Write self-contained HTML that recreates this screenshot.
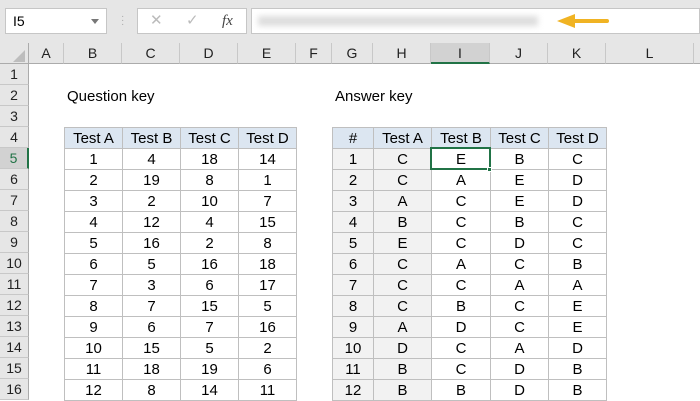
<!DOCTYPE html><html><head><style>
*{margin:0;padding:0;box-sizing:border-box}
body{width:700px;height:400px;overflow:hidden;background:#fff;font-family:"Liberation Sans",sans-serif;position:relative;color:#000}
.abs{position:absolute}
.ch{position:absolute;top:43px;height:21px;background:#e6e6e6;border-right:1px solid #c8c8c8;border-bottom:1px solid #ababab;font-size:14px;text-align:center;line-height:21px;color:#222}
.rh{position:absolute;left:0;width:29px;height:21px;background:#e6e6e6;border-bottom:1px solid #c8c8c8;border-right:1px solid #ababab;font-size:14px;text-align:center;line-height:21px;color:#222}
table{position:absolute;border-collapse:collapse;font-size:15px}
td{height:21px;border:1px solid #bfbfbf;text-align:center;padding:0;line-height:19px}
tr.h td{background:#dce6f1}
td.g{background:#f2f2f2}
</style></head><body>
<div class="abs" style="left:0;top:0;width:700px;height:43px;background:#e6e6e6"></div>
<div class="abs" style="left:5px;top:8px;width:102px;height:26px;background:#fff;border:1px solid #c6c6c6;font-size:14px;line-height:24px;padding-left:7px">I5<span style="position:absolute;right:7px;top:10px;border-left:4px solid transparent;border-right:4px solid transparent;border-top:5px solid #777"></span></div>
<div class="abs" style="left:121px;top:15px;color:#aaa;font-size:10px;line-height:4px">·<br>·<br>·</div>
<div class="abs" style="left:137px;top:8px;width:110px;height:26px;background:#fff;border:1px solid #c6c6c6;font-size:15px;line-height:24px;color:#bbb"><span style="position:absolute;left:12px">✕</span><span style="position:absolute;left:48px">✓</span><span style="position:absolute;left:84px;color:#444;font-family:'Liberation Serif';font-style:italic">fx</span></div>
<div class="abs" style="left:251px;top:8px;width:449px;height:26px;background:#fff;border:1px solid #c6c6c6"></div>
<div class="abs" style="left:258px;top:16px;width:280px;height:10px;background:#ddd;filter:blur(3px)"></div>
<svg class="abs" style="left:555px;top:12px" width="54" height="18"><path d="M18 9H52" stroke="#f0b323" stroke-width="4" stroke-linecap="round"/><path d="M2 9L20 2V16Z" fill="#f0b323"/></svg>
<div class="ch" style="left:0;width:29px;border-right:1px solid #ababab"><svg width="29" height="21" style="position:absolute;left:0;top:0"><path d="M25 7V19H13Z" fill="#bdbdbd"/></svg></div>
<div class="ch" style="left:29px;width:35px">A</div>
<div class="ch" style="left:64px;width:58px">B</div>
<div class="ch" style="left:122px;width:58px">C</div>
<div class="ch" style="left:180px;width:58px">D</div>
<div class="ch" style="left:238px;width:58px">E</div>
<div class="ch" style="left:296px;width:36px">F</div>
<div class="ch" style="left:332px;width:41px">G</div>
<div class="ch" style="left:373px;width:58px">H</div>
<div class="ch" style="left:431px;width:59px;background:#d2d2d2;border-bottom:2px solid #217346">I</div>
<div class="ch" style="left:490px;width:58px">J</div>
<div class="ch" style="left:548px;width:58px">K</div>
<div class="ch" style="left:606px;width:88px">L</div>
<div class="ch" style="left:694px;width:10px"></div>
<div class="rh" style="top:64px">1</div><div class="rh" style="top:85px">2</div><div class="rh" style="top:106px">3</div><div class="rh" style="top:127px">4</div>
<div class="rh" style="top:148px;background:#d2d2d2;border-right:2px solid #217346;color:#217346">5</div>
<div class="rh" style="top:169px">6</div><div class="rh" style="top:190px">7</div><div class="rh" style="top:211px">8</div><div class="rh" style="top:232px">9</div><div class="rh" style="top:253px">10</div><div class="rh" style="top:274px">11</div><div class="rh" style="top:295px">12</div><div class="rh" style="top:316px">13</div><div class="rh" style="top:337px">14</div><div class="rh" style="top:358px">15</div><div class="rh" style="top:379px">16</div>
<div class="abs" style="left:67px;top:88px;font-size:15px">Question key</div>
<div class="abs" style="left:335px;top:88px;font-size:15px">Answer key</div>
<table style="left:64px;top:127px"><colgroup><col style="width:58px"><col style="width:58px"><col style="width:58px"><col style="width:58px"></colgroup>
<tr class="h"><td>Test A</td><td>Test B</td><td>Test C</td><td>Test D</td></tr>
<tr><td>1</td><td>4</td><td>18</td><td>14</td></tr>
<tr><td>2</td><td>19</td><td>8</td><td>1</td></tr>
<tr><td>3</td><td>2</td><td>10</td><td>7</td></tr>
<tr><td>4</td><td>12</td><td>4</td><td>15</td></tr>
<tr><td>5</td><td>16</td><td>2</td><td>8</td></tr>
<tr><td>6</td><td>5</td><td>16</td><td>18</td></tr>
<tr><td>7</td><td>3</td><td>6</td><td>17</td></tr>
<tr><td>8</td><td>7</td><td>15</td><td>5</td></tr>
<tr><td>9</td><td>6</td><td>7</td><td>16</td></tr>
<tr><td>10</td><td>15</td><td>5</td><td>2</td></tr>
<tr><td>11</td><td>18</td><td>19</td><td>6</td></tr>
<tr><td>12</td><td>8</td><td>14</td><td>11</td></tr>
</table>
<table style="left:332px;top:127px"><colgroup><col style="width:41px"><col style="width:58px"><col style="width:59px"><col style="width:58px"><col style="width:58px"></colgroup>
<tr class="h"><td>#</td><td>Test A</td><td>Test B</td><td>Test C</td><td>Test D</td></tr>
<tr><td class="g">1</td><td class="g">C</td><td>E</td><td>B</td><td>C</td></tr>
<tr><td class="g">2</td><td class="g">C</td><td>A</td><td>E</td><td>D</td></tr>
<tr><td class="g">3</td><td class="g">A</td><td>C</td><td>E</td><td>D</td></tr>
<tr><td class="g">4</td><td class="g">B</td><td>C</td><td>B</td><td>C</td></tr>
<tr><td class="g">5</td><td class="g">E</td><td>C</td><td>D</td><td>C</td></tr>
<tr><td class="g">6</td><td class="g">C</td><td>A</td><td>C</td><td>B</td></tr>
<tr><td class="g">7</td><td class="g">C</td><td>C</td><td>A</td><td>A</td></tr>
<tr><td class="g">8</td><td class="g">C</td><td>B</td><td>C</td><td>E</td></tr>
<tr><td class="g">9</td><td class="g">A</td><td>D</td><td>C</td><td>E</td></tr>
<tr><td class="g">10</td><td class="g">D</td><td>C</td><td>A</td><td>D</td></tr>
<tr><td class="g">11</td><td class="g">B</td><td>C</td><td>D</td><td>B</td></tr>
<tr><td class="g">12</td><td class="g">B</td><td>B</td><td>D</td><td>B</td></tr>
</table>
<div class="abs" style="left:430px;top:147px;width:61px;height:23px;border:2px solid #217346"></div>
<div class="abs" style="left:487px;top:167px;width:5px;height:5px;background:#217346;border:1px solid #fff"></div>
</body></html>
